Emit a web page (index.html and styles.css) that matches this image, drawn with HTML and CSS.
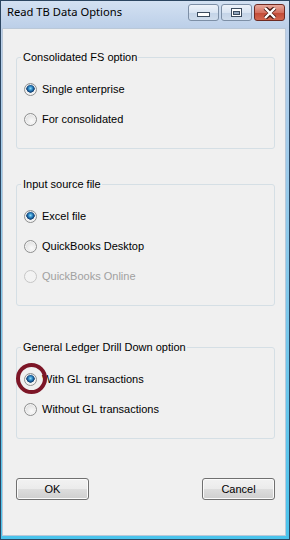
FILE: index.html
```html
<!DOCTYPE html>
<html lang="en">
<head>
    <meta charset="UTF-8">
    <title>Read TB Data Options</title>
    <link rel="stylesheet" href="styles.css">
</head>
<body>
    <div class="window">
        <div class="titlebar">
            <span class="title">Read TB Data Options</span>
            <div class="caption">
                <span class="cap-btn">
                    <svg width="13" height="6" viewBox="0 0 13 6"><rect x="0.5" y="0.5" width="12" height="4" fill="#fff" stroke="#3b4b5e"/></svg>
                </span>
                <span class="cap-btn">
                    <svg width="11" height="9" viewBox="0 0 11 9"><rect x="0.5" y="0.5" width="10" height="8" fill="#fff" stroke="#3b4b5e"/><rect x="2.5" y="3.5" width="6" height="3" fill="#8fa3bb" stroke="#3b4b5e"/></svg>
                </span>
                <span class="cap-btn close">
                    <svg width="14" height="12" viewBox="0 0 14 12"><path d="M2 1 L7 5 L12 1 M2 11 L7 7 L12 11" fill="none" stroke="#4a1c16" stroke-width="4.2"/><path d="M2 1 L12 11 M12 1 L2 11" fill="none" stroke="#fff" stroke-width="2.4"/></svg>
                </span>
            </div>
        </div>

        <div class="client">
            <fieldset class="group">
                <legend>Consolidated FS option</legend>
                <label class="option"><span class="radio checked"></span>Single enterprise</label>
                <label class="option"><span class="radio"></span>For consolidated</label>
            </fieldset>

            <fieldset class="group group-source">
                <legend>Input source file</legend>
                <label class="option"><span class="radio checked"></span>Excel file</label>
                <label class="option"><span class="radio"></span>QuickBooks Desktop</label>
                <label class="option disabled"><span class="radio"></span>QuickBooks Online</label>
            </fieldset>

            <fieldset class="group group-ledger">
                <legend>General Ledger Drill Down option</legend>
                <label class="option"><span class="radio checked"></span>With GL transactions</label>
                <label class="option"><span class="radio"></span>Without GL transactions</label>
            </fieldset>

            <div class="actions">
                <button>OK</button>
                <button>Cancel</button>
            </div>
        </div>

        <span class="ring"></span>
    </div>
</body>
</html>
```

FILE: styles.css
```css
body {
    margin: 0;
    background-color: #ffffff;
}
.window {
    position: relative;
    width: 290px;
    height: 540px;
    box-sizing: border-box;
    border: 1px solid #2c4661;
    background: linear-gradient(#c9daef 0, #bcd0ea 28px, #9fcbea 160px, #49c3ec 100%);
    display: flex;
    flex-direction: column;
}
.titlebar {
    height: 27px;
    display: flex;
    justify-content: space-between;
    align-items: flex-start;
    padding: 0 4px 0 6px;
    background: linear-gradient(#d3e1f2, #bccfe8);
}
.title {
    font-family: "Noto Sans", sans-serif;
    font-size: 11.2px;
    line-height: 16px;
    padding-top: 3px;
    color: #000;
}
.caption {
    display: flex;
    gap: 2px;
    margin-top: 3px;
}
.cap-btn {
    width: 31px;
    height: 17px;
    box-sizing: border-box;
    border: 1px solid #7d8fa6;
    border-radius: 3px;
    background: linear-gradient(#eef3fa 0, #d9e4f2 50%, #c3d3e7 51%, #cfdcec 100%);
    display: flex;
    align-items: center;
    justify-content: center;
}
.cap-btn:first-child svg {
    margin-top: 5px;
}
.cap-btn.close {
    border-color: #6e2a22;
    background: linear-gradient(#e7a89c 0, #d47160 50%, #c24a36 51%, #d2664f 100%);
}
.client {
    flex: 1;
    margin: 0 3px 3px 1px;
    border: 1px solid #bac8d8;
    background-color: #f0f0f0;
    font-family: "Liberation Sans", Arial, sans-serif;
    font-size: 11px;
    color: #000;
    padding-top: 21px;
}
.group {
    width: 259px;
    box-sizing: border-box;
    margin: 0 0 0 13px;
    padding: 10px 0 14px 0;
    border: 1px solid #d5dfe5;
    border-radius: 3px;
}
.group legend {
    margin-left: 4px;
    padding: 0 1px 0 2px;
    line-height: 14px;
}
.group-source {
    margin-top: 28px;
}
.group-ledger {
    margin-top: 34px;
}
.option {
    height: 30px;
    padding-left: 7px;
    display: flex;
    align-items: center;
    gap: 5px;
}
.option.disabled {
    color: #a0a0a0;
}
.radio {
    width: 13px;
    height: 13px;
    box-sizing: border-box;
    border-radius: 50%;
    border: 1px solid #8e8f8f;
    background: radial-gradient(circle at 60% 65%, #fbfbfb 0, #e6e6e6 55%, #d2d2d2 100%);
    box-shadow: inset 0 0 0 1px #f4f4f4;
}
.radio.checked {
    background: radial-gradient(circle at 50% 40%, #9ddcf8 0, #3f9fd6 1.5px, #1a5d99 3px, #0e3c6c 4px, #f4f4f4 4.5px, #e0e0e0 100%);
}
.option.disabled .radio {
    border-color: #c6c6c6;
    background: #f3f3f3;
    box-shadow: none;
}
.actions {
    display: flex;
    justify-content: space-between;
    width: 259px;
    margin: 39px 0 0 13px;
}
.actions button {
    width: 73px;
    height: 22px;
    border: 1px solid #707070;
    border-radius: 3px;
    background: linear-gradient(#f2f2f2 0, #ebebeb 50%, #dddddd 51%, #cfcfcf 100%);
    box-shadow: inset 0 0 0 1px #fbfbfb;
    font-family: "Liberation Sans", Arial, sans-serif;
    font-size: 11px;
    color: #000;
    padding: 0;
}
.ring {
    position: absolute;
    left: 15px;
    top: 362px;
    width: 31px;
    height: 31px;
    box-sizing: border-box;
    border: 4px solid #7d1627;
    border-radius: 50%;
}
```
